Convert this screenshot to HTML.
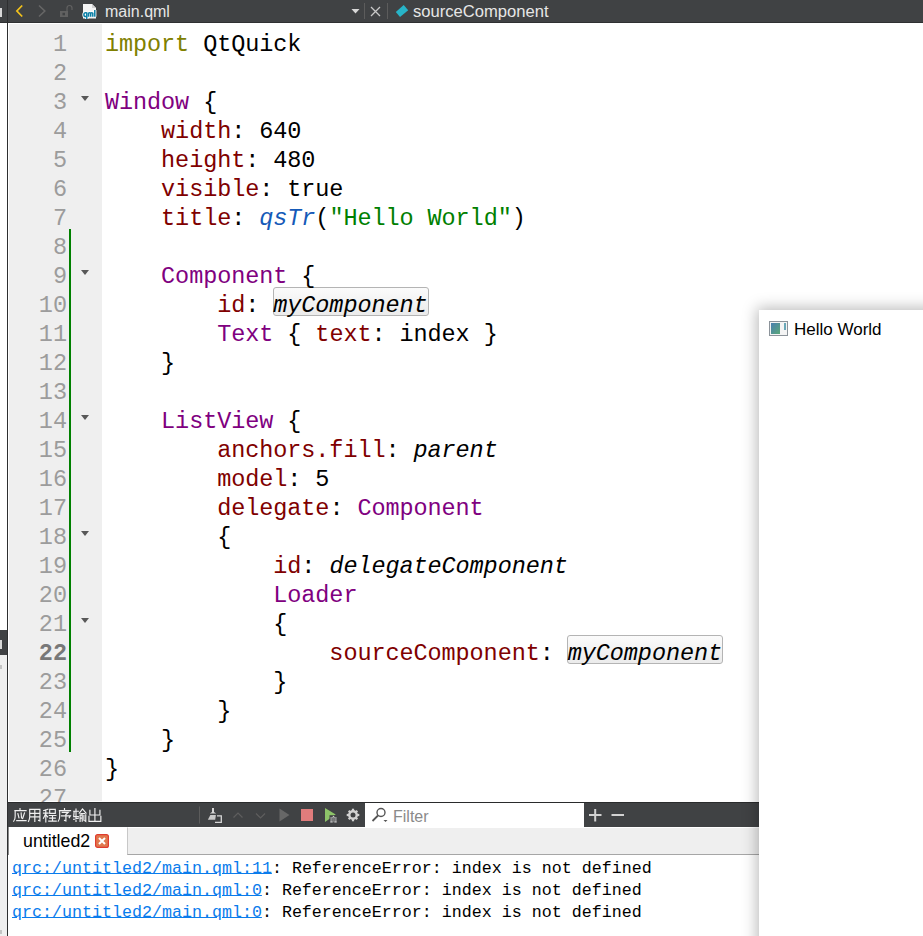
<!DOCTYPE html>
<html><head><meta charset="utf-8">
<style>
*{margin:0;padding:0;box-sizing:border-box}
html,body{width:923px;height:936px;overflow:hidden;background:#fff;position:relative;font-family:"Liberation Sans",sans-serif}
.abs{position:absolute}
#tb{left:0;top:0;width:923px;height:23px;background:#404244;border-bottom:1px solid #2f3032}
#ls1{left:0;top:23px;width:7px;height:607px;background:#fff}
#ls2{left:0;top:630px;width:7px;height:25px;background:#404244}
#ls3{left:0;top:655px;width:7px;height:281px;background:#efefef}
#vline{left:7px;top:0;width:1px;height:936px;background:#2e2f30}
#gutter{left:8px;top:23px;width:94px;height:778px;background:#efefef;border-top:1px solid #fff;border-left:1px solid #fff}
#code{left:105px;top:30px;font-family:"Liberation Mono",monospace;font-size:23.5px;letter-spacing:-0.08px;line-height:29px;white-space:pre;color:#000}
#nums{left:8px;top:30px;width:59px;text-align:right;font-family:"Liberation Mono",monospace;font-size:23.5px;line-height:29px;white-space:pre;color:#9c9c9c}
.k{color:#808000}.t{color:#800080}.p{color:#800000}.s{color:#008000}.f{color:#155ab8;font-style:italic}.i{font-style:italic}
.hlb{border:1px solid #b4b4b4;border-radius:3px;background:linear-gradient(#fbfbfb,#ebebeb);height:29px}
.fold{width:0;height:0;border-left:4.8px solid transparent;border-right:4.8px solid transparent;border-top:5px solid #585858}
#gbar{left:69px;top:229px;width:2px;height:523px;background:#008000}
.tbt{color:#e6e6e6;font-size:16px;top:2px;line-height:20px}
#hdr{left:8px;top:802px;width:751px;height:25px;background:#404244;border-top:1px solid #2a2b2c}
#filter{left:365px;top:803px;width:219px;height:24px;background:#fff}
#tab{left:8px;top:827px;width:119px;height:28px;background:#fff;border-left:1px solid #8a8a8a}
#tabgray{left:127px;top:827px;width:632px;height:28px;background:#efefef;border-left:1px solid #c8c8c8;border-bottom:1px solid #a6a6a6;border-top:1px solid #fff}
#out{left:12px;top:858px;font-family:"Liberation Mono",monospace;font-size:16.67px;line-height:22px;white-space:pre;color:#000}
.lnk{color:#0a7cec;text-decoration:underline;text-underline-offset:0px}
#win{left:759px;top:310px;width:200px;height:700px;background:#fff;box-shadow:0 0 14px 2px rgba(0,0,0,0.28)}
</style></head><body>
<!-- toolbar -->
<div id="tb" class="abs"></div>
<div class="abs" style="left:0;top:8px;width:2px;height:9px;background:#d8d8d8"></div>
<svg class="abs" style="left:0;top:0" width="923" height="22">
  <path d="M22.2 5.5 L16.9 11 L22.2 16.5" fill="none" stroke="#f2c21b" stroke-width="1.75"/>
  <path d="M39 5.5 L44.8 11 L39 16.5" fill="none" stroke="#666" stroke-width="1.6"/>
  <rect x="60" y="11" width="8" height="6" fill="#616161"/>
  <rect x="62.5" y="12.8" width="2.5" height="2.5" fill="#404244"/>
  <path d="M67 11 V8 a2.5 2.5 0 0 1 5 0 V10" fill="none" stroke="#616161" stroke-width="1.2"/>
  <path d="M83 4 H92 L96 8 V18.5 H83 Z" fill="#f4f4f4"/>
  <path d="M92 4 V8 H96" fill="#d0d0d0"/>
  <path d="M86.8 12.8 h-1.2 a1.7 1.9 0 0 0 0 3.8 h1.2 M86.8 12.5 v6.5 M88.6 16.8 v-4.2 M88.6 13.2 q1.2 -0.8 2.1 0 v3.6 M90.7 13.2 q1.2 -0.8 2.1 0 v3.6 M94.8 10 v6.8" fill="none" stroke="#fff" stroke-width="3.2" stroke-linejoin="round"/><path d="M86.8 12.8 h-1.2 a1.7 1.9 0 0 0 0 3.8 h1.2 M86.8 12.5 v6.5 M88.6 16.8 v-4.2 M88.6 13.2 q1.2 -0.8 2.1 0 v3.6 M90.7 13.2 q1.2 -0.8 2.1 0 v3.6 M94.8 10 v6.8" fill="none" stroke="#0a7fa6" stroke-width="1.5"/>
  <path d="M351.5 9 H359.5 L355.5 13.5 Z" fill="#d8d8d8"/>
  <rect x="364" y="3" width="1" height="16" fill="#5c5c5c"/>
  <path d="M371 7 L380 16 M380 7 L371 16" stroke="#c8c8c8" stroke-width="1.3"/>
  <rect x="387" y="3" width="1" height="16" fill="#5c5c5c"/>
  <path d="M403.7 5 L408.2 10.2 L400 17 L395.8 12 Z" fill="#27b4c8"/>
</svg>
<div class="abs tbt" style="left:105px">main.qml</div>
<div class="abs tbt" style="left:413px;font-size:16.6px">sourceComponent</div>

<div id="ls1" class="abs"></div>
<div id="ls2" class="abs"></div>
<div class="abs" style="left:0;top:640px;width:2px;height:9px;background:#d8d8d8"></div>
<div id="ls3" class="abs"></div>
<div class="abs" style="left:0;top:665px;width:2px;height:4px;background:#c4c4c4"></div>
<div class="abs" style="left:0;top:930px;width:2px;height:4px;background:#c4c4c4"></div>
<div id="vline" class="abs"></div>

<!-- editor -->
<div id="gutter" class="abs"></div>
<div id="gbar" class="abs"></div>
<div class="abs fold" style="left:81px;top:96px"></div>
<div class="abs fold" style="left:81px;top:270px"></div>
<div class="abs fold" style="left:81px;top:415px"></div>
<div class="abs fold" style="left:81px;top:531px"></div>
<div class="abs fold" style="left:81px;top:618px"></div>
<div class="abs hlb" style="left:273px;top:287px;width:156px"></div>
<div class="abs hlb" style="left:567px;top:635px;width:156px"></div>
<div id="nums" class="abs">1
2
3
4
5
6
7
8
9
10
11
12
13
14
15
16
17
18
19
20
21
<b style="color:#787878">22</b>
23
24
25
26
27</div>
<div id="code" class="abs"><span class="k">import</span> QtQuick

<span class="t">Window</span> {
    <span class="p">width</span>: 640
    <span class="p">height</span>: 480
    <span class="p">visible</span>: true
    <span class="p">title</span>: <span class="f">qsTr</span>(<span class="s">"Hello World"</span>)

    <span class="t">Component</span> {
        <span class="p">id</span>: <span class="i">myComponent</span>
        <span class="t">Text</span> { <span class="p">text</span>: index }
    }

    <span class="t">ListView</span> {
        <span class="p">anchors.fill</span>: <span class="i">parent</span>
        <span class="p">model</span>: 5
        <span class="p">delegate</span>: <span class="t">Component</span>
        {
            <span class="p">id</span>: <span class="i">delegateComponent</span>
            <span class="t">Loader</span>
            {
                <span class="p">sourceComponent</span>: <span class="i">myComponent</span>
            }
        }
    }
}
</div>

<!-- bottom panel -->
<div id="hdr" class="abs"></div>
<div id="filter" class="abs"></div>
<svg class="abs" style="left:0;top:802px" width="760" height="25">
  <rect x="199" y="4.5" width="1" height="17" fill="#5c5c5c"/>
  <!-- broom -->
  <path d="M212 6 h2 v4 l2.2 1.6 h-6.4 l2.2 -1.6 z" fill="#d6d6d6"/>
  <path d="M210.3 13 h5.6 l-0.7 4.7 h-7.3 z" fill="#c8c8c8"/>
  <path d="M217 13.8 h4.3 v6.5 h-6.3" fill="none" stroke="#d6d6d6" stroke-width="1.3"/>
  <path d="M233.5 15.5 L238 11 L242.5 15.5" fill="none" stroke="#5e5e5e" stroke-width="1.2"/>
  <path d="M256 11.5 L260.5 16 L265 11.5" fill="none" stroke="#5e5e5e" stroke-width="1.2"/>
  <path d="M279.5 6.5 L289.5 13 L279.5 19.5 Z" fill="#676767"/>
  <rect x="301" y="7" width="12" height="12" fill="#e07c7c"/>
  <path d="M325 6 L335.7 12.5 L325 20 Z" fill="#8dc469"/>
  <path d="M329.5 13.2 h8 v7.2 h-8 z" fill="#404244"/>
  <path d="M333.5 13.8 l1.6 1.8 h-3.2 z" fill="#d4d4d4"/>
  <path d="M330.3 16 h2.4 M334.3 16 h2.4 M330.3 18 h2.4 M334.3 18 h2.4 M330.3 19.8 h2.4 M334.3 19.8 h2.4" stroke="#d4d4d4" stroke-width="1.2"/>
  <path d="M333.5 15.5 v4.8" stroke="#888" stroke-width="0.8"/>
  <g transform="translate(353,13)" fill="#d2d2d2">
    <circle r="4.9"/>
    <rect x="-1.1" y="-6.3" width="2.2" height="12.6"/>
    <rect x="-6.3" y="-1.1" width="12.6" height="2.2"/>
    <rect x="-1.1" y="-6.1" width="2.2" height="12.2" transform="rotate(45)"/>
    <rect x="-1.1" y="-6.1" width="2.2" height="12.2" transform="rotate(-45)"/>
    <circle r="2.5" fill="#404244"/>
  </g>
  <circle cx="381" cy="10.5" r="4" fill="none" stroke="#555" stroke-width="1.4"/>
  <path d="M378 13.5 L372.5 19" stroke="#555" stroke-width="1.8"/>
  <path d="M383.5 18 h4 l-2 2 z" fill="#555"/>
  <path d="M589 13 h12.5 M595.2 7 v12.5" stroke="#d2d2d2" stroke-width="2"/>
  <path d="M611.5 13 h12.5" stroke="#d2d2d2" stroke-width="2"/>
  <!-- chinese title approx -->
  <g fill="none" stroke="#f0f0f0" stroke-width="1.25" stroke-linecap="square">
    <g transform="translate(13.5,6.5) scale(0.93)">
      <path d="M7 0 v1.2 M1.5 2.2 h12 M1.8 2.2 v6 q0 3.5 -1.6 5.5 M4.7 5.5 l1.2 4.6 M8.2 4.8 l0.4 5.2 M11.8 4.8 l-2 6 M3.5 13 h10"/>
    </g>
    <g transform="translate(28.3,6.5) scale(0.93)">
      <path d="M1.5 1 v8 q0 3 -1.3 4.8 M1.5 1 h11 v12.3 l-1.5 -0.5 M1.5 5.2 h11 M1.5 9 h11 M7 1 v13"/>
    </g>
    <g transform="translate(43.2,6.5) scale(0.93)">
      <path d="M0.5 2.2 l4.5 -1.4 M2.8 1.5 v12.8 M0.3 5 h5 M2.8 5.5 l-2.5 5 M2.8 6.5 l2 2.5 M7 1 h6 v4.2 h-6 z M6.6 7.5 h7 M10 7.5 v5.8 M7 10.4 h6 M6 13.5 h8"/>
    </g>
    <g transform="translate(58,6.5) scale(0.93)">
      <path d="M7 0 v1.2 M1.5 2.2 h12 M1.8 2.2 v6 q0 3.5 -1.6 5.5 M4.5 4.2 h6.5 l-2.5 2.2 M8.5 6.4 v7 l-1.5 -0.6 M3.8 8 h9.5 l-1.2 1.8"/>
    </g>
    <g transform="translate(73.4,6.5) scale(0.93)">
      <path d="M0.3 3 h5 M2.8 0.5 v13.5 M0.8 3.5 l-0.5 5.2 h5 M0.3 11.5 l5 -1 M6.3 5 l3.5 -4.5 l3.8 4.5 M8 5.5 h4 M7.2 7.2 v6.8 M7.2 7.2 h2.3 v6.5 M7.2 10.3 h2.3 M11.3 7.5 v5 M13.3 6.8 v7 l-0.8 -0.5"/>
    </g>
    <g transform="translate(88.4,6.5) scale(0.93)">
      <path d="M7 0 v13.8 M1.6 2 v5 h10.8 v-5 M0.6 8.5 v5.3 h12.8 v-5.3"/>
    </g>
  </g>
</svg>
<div class="abs" style="left:393px;top:810px;color:#8a8a8a;font-size:16px;line-height:14px">Filter</div>
<div id="tab" class="abs"></div>
<div id="tabgray" class="abs"></div>
<div class="abs" style="left:23px;top:832px;color:#000;font-size:17.8px;line-height:18px">untitled2</div>
<svg class="abs" style="left:95px;top:834px" width="14" height="14">
  <rect x="0.6" y="0.6" width="12.8" height="12.8" rx="2" fill="#e0784e" stroke="#e03c2e" stroke-width="1.2"/>
  <path d="M4 4 L10 10 M10 4 L4 10" stroke="#fff" stroke-width="2"/>
</svg>
<div id="out" class="abs"><span class="lnk">qrc:/untitled2/main.qml:11</span>: ReferenceError: index is not defined
<span class="lnk">qrc:/untitled2/main.qml:0</span>: ReferenceError: index is not defined
<span class="lnk">qrc:/untitled2/main.qml:0</span>: ReferenceError: index is not defined</div>

<!-- app window -->
<div id="win" class="abs"></div>
<svg class="abs" style="left:769px;top:321px" width="20" height="16">
  <defs><linearGradient id="gg" x1="0" y1="0" x2="1" y2="1"><stop offset="0" stop-color="#4a7fb0"/><stop offset="1" stop-color="#5aa878"/></linearGradient></defs>
  <rect x="0.5" y="0.5" width="18" height="14" fill="#f4f4f4" stroke="#8c939a"/>
  <rect x="2" y="2" width="9" height="11" fill="url(#gg)"/>
  <rect x="15" y="2" width="2" height="7" fill="#6aa8b8"/>
</svg>
<div class="abs" style="left:794px;top:321px;color:#000;font-size:17px;line-height:18px">Hello World</div>
</body></html>
